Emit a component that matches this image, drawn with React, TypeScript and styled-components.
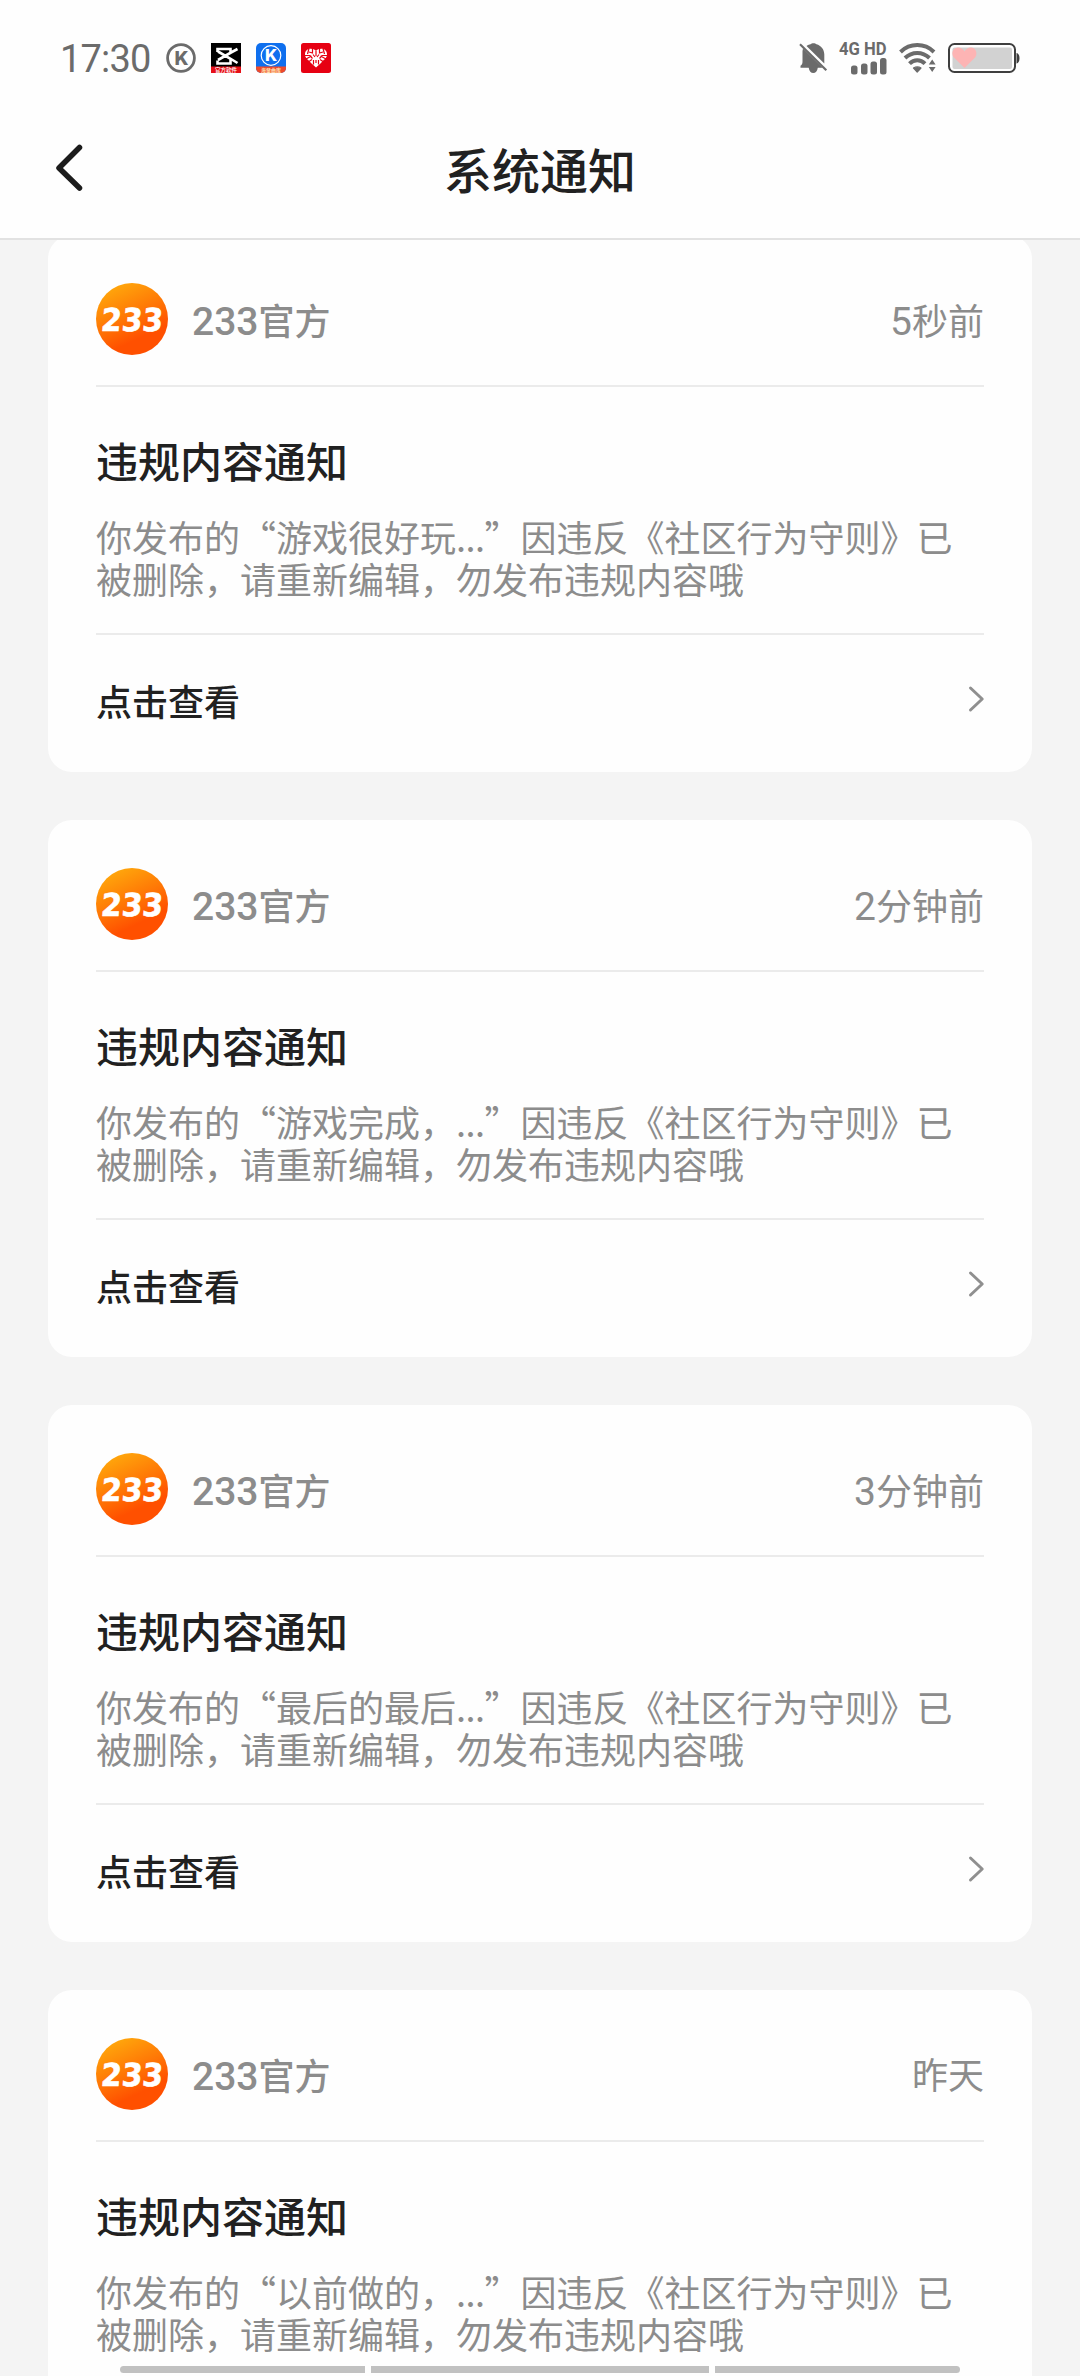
import React from "react";
import styled, { createGlobalStyle } from "styled-components";

const cjk = '"Noto Sans CJK SC", "Noto Sans", sans-serif';
const mixed = 'Roboto, "Noto Sans CJK SC", sans-serif';

const GlobalStyle = createGlobalStyle`
  * { box-sizing: border-box; }
  html, body { margin: 0; padding: 0; background: #f4f4f4; }
`;

const Screen = styled.div`
  width: 1080px;
  height: 2376px;
  overflow: hidden;
  position: relative;
  display: flex;
  flex-direction: column;
  background: #f4f4f4;
  font-family: ${cjk};
`;

const Header = styled.header`
  flex: none;
  position: relative;
  z-index: 1;
  height: 240px;
  background: #fefefe;
  border-bottom: 2px solid #e2e2e2;
`;

const StatusBar = styled.div`
  height: 116px;
  padding: 0 60px;
  display: flex;
  align-items: center;
  justify-content: space-between;
`;

const StatusGroup = styled.div<{ $gap: number }>`
  display: flex;
  align-items: center;
  gap: ${(p) => p.$gap}px;
`;

const Clock = styled.span`
  width: 91px;
  font: 400 38px/44px Roboto, sans-serif;
  letter-spacing: -0.8px;
  color: #6b6b6b;
  padding-top: 2px;
  white-space: nowrap;
`;

const Icon = styled.svg`
  display: block;
  flex: none;
  overflow: visible;
`;

const NavBar = styled.div`
  height: 104px;
  padding: 0 54px;
  display: grid;
  grid-template-columns: 60px 1fr 60px;
  align-items: center;
`;

const BackButton = styled.button`
  border: 0;
  padding: 0;
  background: none;
  display: flex;
`;

const PageTitle = styled.h1`
  margin: 0;
  padding-bottom: 1px;
  text-align: center;
  font-size: 48px;
  line-height: 60px;
  font-weight: 500;
  color: #212121;
`;

const List = styled.main`
  flex: none;
  margin-top: -5px;
  padding: 0 48px;
  display: flex;
  flex-direction: column;
  gap: 48px;
`;

const Card = styled.article`
  height: 537px;
  padding: 48px 48px 0;
  border-radius: 24px;
  background: #fefefe;
`;

const CardHead = styled.div`
  height: 104px;
  padding-bottom: 30px;
  display: flex;
  align-items: center;
  border-bottom: 2px solid #ebebeb;
`;

const Sender = styled.span`
  flex: 1;
  margin-left: 24px;
  padding-top: 6px;
  font: 500 36px/48px ${mixed};
  color: #8c8c8c;
`;

const Time = styled.time`
  padding-top: 6px;
  font: 400 36px/48px ${mixed};
  color: #8c8c8c;
`;

const Digits = styled.span`
  font-size: 39px;
`;

const Subject = styled.h2`
  margin: 0;
  padding-top: 43px;
  font-size: 42px;
  line-height: 60px;
  font-weight: 500;
  color: #212121;
`;

const Message = styled.p`
  margin: 0;
  padding-top: 25px;
  height: 145px;
  font-size: 36px;
  line-height: 42px;
  color: #8c8c8c;
  border-bottom: 2px solid #ebebeb;
`;

const Dots = styled.span`
  letter-spacing: -0.5px;
`;

const Action = styled.div`
  height: 127px;
  display: flex;
  align-items: center;
  justify-content: space-between;
  font-size: 36px;
  line-height: 48px;
  font-weight: 500;
  color: #212121;
`;

const ActionLabel = styled.span`
  padding-top: 3px;
`;

const GestureBars = styled.div`
  position: absolute;
  z-index: 2;
  left: 120px;
  bottom: 3px;
  width: 840px;
  display: grid;
  grid-template-columns: 245px 338px 245px;
  gap: 6px;
  border-radius: 4px;
  overflow: hidden;
`;

const GestureBar = styled.span`
  height: 7px;
  background: #c1c1c1;
`;

function KCircle() {
  return (
    <Icon width="30" height="30" viewBox="0 0 30 30">
      <circle cx="15" cy="15" r="13.4" fill="none" stroke="#6b6b6b" strokeWidth="2.8" />
      <text x="15.4" y="21.8" textAnchor="middle" fontFamily="Inter, sans-serif" fontWeight="800" fontSize="19" fill="#6b6b6b">K</text>
    </Icon>
  );
}

function VideoEditorIcon() {
  return (
    <Icon width="30" height="30" viewBox="0 0 30 30">
      <rect width="30" height="30" fill="#000" />
      <rect y="23.500" width="30" height="6.500" fill="#e60f17" />
      <path d="M26.500 6 L20 9.500 L7 17 M26.500 20 L20 16 L7 8.500 M19.500 9.500 V6 H6.500 V9 M19.500 16.500 V20.500 H6.500 V17.500" fill="none" stroke="#fff" strokeWidth="2.600" />
      <text x="15" y="29.200" textAnchor="middle" fontFamily='"Noto Sans CJK SC", sans-serif' fontWeight="500" fontSize="5.500" fill="#fff">官方软件</text>
    </Icon>
  );
}

function MusicIcon() {
  return (
    <Icon width="30" height="30" viewBox="0 0 30 30">
      <defs>
        <clipPath id="musicClip"><rect width="30" height="30" rx="5" /></clipPath>
      </defs>
      <g clipPath="url(#musicClip)">
        <rect width="30" height="30" fill="#0f6fee" />
        <rect y="23.500" width="30" height="6.500" fill="#ee4a2b" />
      </g>
      <circle cx="15" cy="12.500" r="9.800" fill="none" stroke="#fff" strokeWidth="1.200" />
      <text x="15.200" y="18.300" textAnchor="middle" fontFamily="Inter, sans-serif" fontWeight="800" fontSize="16.500" fill="#fff">K</text>
      <text x="15" y="29" textAnchor="middle" fontFamily='"Noto Sans CJK SC", sans-serif' fontWeight="700" fontSize="5" fill="#ffe9b8">海量曲库</text>
    </Icon>
  );
}

function HeartAppIcon() {
  return (
    <Icon width="30" height="30" viewBox="0 0 30 30">
      <rect width="30" height="30" rx="2.500" fill="#e60012" />
      <path d="M15 8 C12 4.500 4 5 4 11.500 C4 15.500 8 17 10 20 L15 24.500 L20 20 C22 17 26 15.500 26 11.500 C26 5 18 4.500 15 8 Z" fill="#fff" />
      <path d="M11.500 5 V10 L8 9 M8 5.500 L6.500 11 M4 12.500 H9 L11.500 15.500 M5 16 L10.500 13 M8 18.500 L11 16.500 M18.500 5 V10 L22 9 M22 5.500 L23.500 11 M26 12.500 H21 L18.500 15.500 M25 16 L19.500 13 M22 18.500 L19 16.500 M15 8 V13 M12 11.500 L14 14 M18 11.500 L16 14 M12.500 17 V21.500 M17.500 17 V21.500 M15 17 V20" fill="none" stroke="#e60012" strokeWidth="1.200" />
    </Icon>
  );
}

function MutedBell() {
  return (
    <Icon width="28" height="30" viewBox="0 0 28 30">
      <path d="M7.500 3 C9 1.800 10.500 1.500 11.500 1.300 C12.500 -.2 16.500 -.2 17.500 1.300 C22 2.500 25.300 6.500 25.300 11.500 V20.500 Z" fill="#6b6b6b" />
      <path d="M4 5.500 L23.500 24.700 H18.800 C18.300 28 16.500 30 14.300 30 C12 30 10.200 28 9.700 24.700 H1.500 V22.800 C3 22 3.500 20.500 3.500 18.500 V8 Z" fill="#6b6b6b" />
      <path d="M1 1.300 L27.300 27.300" stroke="#6b6b6b" strokeWidth="2.200" />
    </Icon>
  );
}

function Signal() {
  return (
    <Icon width="48" height="34" viewBox="0 0 48 34">
      <text x="0" y="14" textLength="47.500" lengthAdjust="spacingAndGlyphs" fontFamily="Roboto, sans-serif" fontWeight="700" fontSize="17.500" fill="#6b6b6b">4G HD</text>
      <rect x="12" y="24.500" width="6.500" height="9" rx="2.500" fill="#6b6b6b" />
      <rect x="22" y="22.500" width="6.500" height="11" rx="2.500" fill="#6b6b6b" />
      <rect x="31.500" y="20.500" width="6.500" height="13" rx="2.500" fill="#6b6b6b" />
      <rect x="41" y="17" width="6.500" height="16.500" rx="2.500" fill="#6b6b6b" />
    </Icon>
  );
}

function Wifi() {
  return (
    <Icon width="37" height="30" viewBox="0 0 37 30">
      <g fill="none" stroke="#6b6b6b" strokeWidth="4">
        <path d="M1.500 9 C11 -.2 25.500 -.2 35 9" />
        <path d="M6 15 C13 8.200 23.500 8.200 30.500 15" />
        <path d="M10.500 20.700 C15 16.200 21.500 16.200 26 20.700" />
      </g>
      <path d="M14.500 25 C16.800 23.500 19.800 23.500 22 25 L18.200 29 Z" fill="#6b6b6b" stroke="#6b6b6b" strokeWidth="1.200" strokeLinejoin="round" />
      <path d="M29.800 21.500 L33.200 16.500 L36.600 21.500 Z M29.800 24 L33.200 29 L36.600 24 Z" fill="#6b6b6b" />
    </Icon>
  );
}

function Battery() {
  return (
    <Icon width="72" height="30" viewBox="0 0 72 30">
      <rect x="1" y="1" width="66" height="28" rx="5.500" fill="#fff" stroke="#3f3f3f" strokeWidth="2" />
      <rect x="4.500" y="4.500" width="59.500" height="21.500" rx="2" fill="#d2d2d2" />
      <path d="M16.500 25 L5.500 14 C2.500 9 6 4.500 10 4.500 C13 4.500 15.500 6.500 16.500 8.500 C17.500 6.500 20 4.500 23 4.500 C27 4.500 30 9 27.500 14 Z" fill="#fdb4b4" />
      <path d="M68.500 10 C72.500 10 72.500 20.500 68.500 20.500 Z" fill="#3f3f3f" />
    </Icon>
  );
}

function Avatar() {
  return (
    <Icon width="72" height="72" viewBox="0 0 72 72">
      <defs>
        <linearGradient id="avatarFill" x1="0.150" y1="0.050" x2="0.600" y2="1">
          <stop offset="0" stopColor="#ffaa0c" />
          <stop offset="0.500" stopColor="#ff7405" />
          <stop offset="0.800" stopColor="#ff5000" />
        </linearGradient>
      </defs>
      <circle cx="36" cy="36" r="36" fill="url(#avatarFill)" />
      <text x="4.500" y="48" transform="translate(4 0) skewX(-5)" textLength="62" lengthAdjust="spacingAndGlyphs" fontFamily='"DejaVu Sans", sans-serif' fontWeight="700" fontSize="31.500" fill="#fff" stroke="#fff" strokeWidth="0.600">233</text>
    </Icon>
  );
}

type Notice = { amount?: string; when: string; excerpt: string };

const notices: Notice[] = [
  { amount: "5", when: "秒前", excerpt: "游戏很好玩" },
  { amount: "2", when: "分钟前", excerpt: "游戏完成，" },
  { amount: "3", when: "分钟前", excerpt: "最后的最后" },
  { when: "昨天", excerpt: "以前做的，" },
];

function NoticeCard({ amount, when, excerpt }: Notice) {
  return (
    <Card>
      <CardHead>
        <Avatar />
        <Sender><Digits>233</Digits>官方</Sender>
        <Time>{amount && <Digits>{amount}</Digits>}{when}</Time>
      </CardHead>
      <Subject>违规内容通知</Subject>
      <Message>
        你发布的“{excerpt}<Dots>...</Dots>”因违反《社区行为守则》已
        <br />
        被删除，请重新编辑，勿发布违规内容哦
      </Message>
      <Action>
        <ActionLabel>点击查看</ActionLabel>
        <Icon width="16" height="26" viewBox="0 0 16 26">
          <path d="M2.500 2 L14.200 13 L2.500 24" fill="none" stroke="#8f8f8f" strokeWidth="3" strokeLinecap="round" strokeLinejoin="round" />
        </Icon>
      </Action>
    </Card>
  );
}

export default function App() {
  return (
    <Screen lang="zh-CN">
      <GlobalStyle />
      <Header>
        <StatusBar>
          <StatusGroup $gap={15}>
            <Clock>17:30</Clock>
            <KCircle />
            <VideoEditorIcon />
            <MusicIcon />
            <HeartAppIcon />
          </StatusGroup>
          <StatusGroup $gap={12}>
            <MutedBell />
            <Signal />
            <Wifi />
            <Battery />
          </StatusGroup>
        </StatusBar>
        <NavBar>
          <BackButton aria-label="返回">
            <Icon width="30" height="48" viewBox="0 0 30 48">
              <path d="M25.500 3.500 L5 24 L25.500 44" fill="none" stroke="#1c1c1c" strokeWidth="5.500" strokeLinecap="round" strokeLinejoin="round" />
            </Icon>
          </BackButton>
          <PageTitle>系统通知</PageTitle>
        </NavBar>
      </Header>
      <List>
        {notices.map((n) => (
          <NoticeCard key={n.excerpt} {...n} />
        ))}
      </List>
      <GestureBars>
        <GestureBar />
        <GestureBar />
        <GestureBar />
      </GestureBars>
    </Screen>
  );
}
